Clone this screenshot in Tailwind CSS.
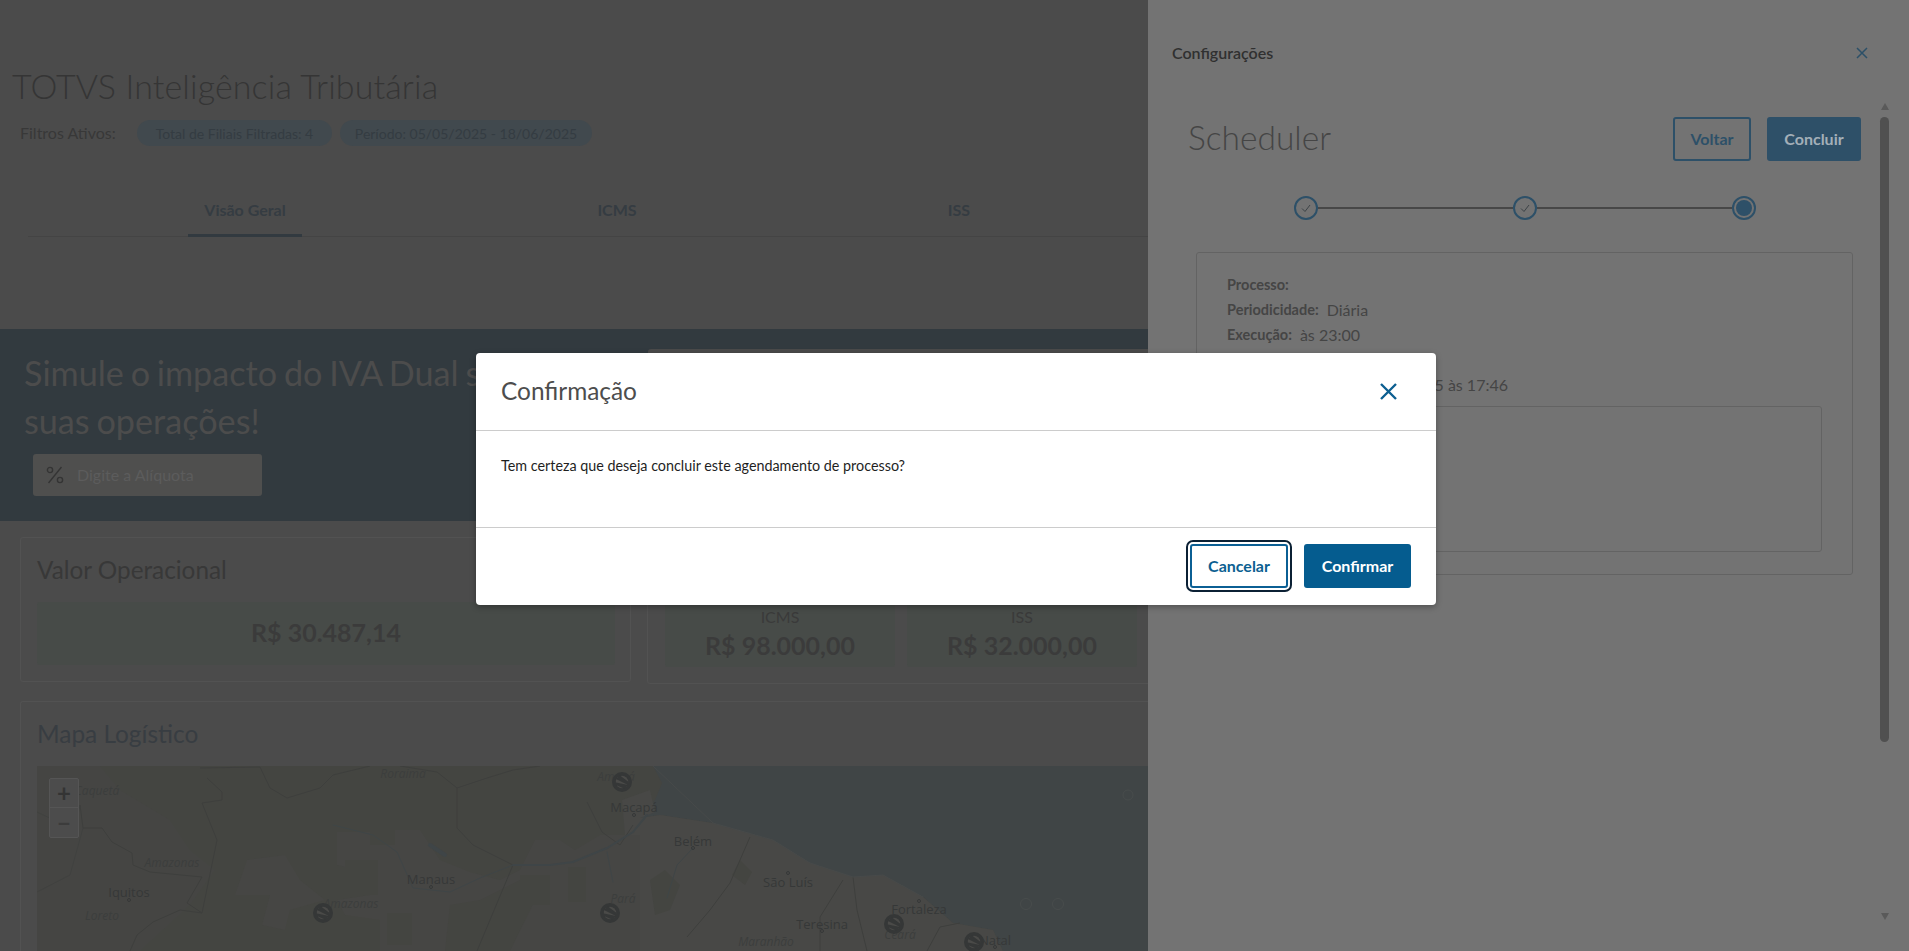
<!DOCTYPE html>
<html lang="pt-BR">
<head>
  <meta charset="UTF-8" />
  <title>TOTVS Inteligência Tributária</title>
  <script src="https://cdn.jsdelivr.net/npm/@tailwindcss/browser@4"></script>
</head>
<body class="relative flex h-screen overflow-hidden bg-[#4b4b4b] [font-family:Lato,'Noto_Sans',sans-serif]">

  <!-- pagina de fundo -->
  <main class="h-screen w-[1148px] shrink-0 overflow-hidden bg-[#4b4b4b]">
    <h1 class="mt-[62px] h-[48px] whitespace-nowrap pl-3 text-[34px] font-light leading-[48px] tracking-[0.12px] text-[#353535]">TOTVS Inteligência Tributária</h1>

    <div class="mt-[10px] flex h-[26px] items-center pl-5 text-[#383838]">
      <span class="w-[117px] text-[16px]">Filtros Ativos:</span>
      <span class="flex h-[26px] w-[195px] items-center justify-center rounded-full bg-[#41494e] text-[14px] text-[#343c42]">Total de Filiais Filtradas: 4</span>
      <span class="ml-2 flex h-[26px] w-[252px] items-center justify-center rounded-full bg-[#41494e] text-[14px] text-[#343c42]">Período: 05/05/2025 - 18/06/2025</span>
    </div>

    <nav class="ml-7 mt-[39px] flex h-[52px] border-b border-[#444444] text-[16px] font-bold text-[#353c42]">
      <a class="relative ml-[160px] flex h-[52px] w-[114px] items-start justify-center border-b-[3px] border-[#323a40] pt-[13px]">Visão Geral</a>
      <a class="ml-[275px] flex w-[80px] items-start justify-center pt-[13px]">ICMS</a>
      <a class="ml-[262px] flex w-[80px] items-start justify-center pt-[13px]">ISS</a>
    </nav>

    <section class="mt-[92px] flex h-[192px] bg-[#323a3f]">
      <div class="w-[648px] shrink-0 pl-6 pt-5">
        <h2 class="whitespace-nowrap text-[34.2px] leading-[48px] text-[#4c4c4c] [word-spacing:-2px]">Simule o impacto do IVA Dual sobre<br />suas operações!</h2>
        <div class="ml-[9px] mt-[9px] flex h-[42px] w-[229px] items-center rounded-[3px] bg-[#4f4f4e] pl-[13px]">
          <svg class="h-[18px] w-[18px]" viewBox="0 0 18 18" fill="none" stroke="#343434" stroke-width="1.4">
            <path d="M15.5 1 2.5 17" />
            <circle cx="4" cy="4" r="2.6" />
            <circle cx="14" cy="14" r="2.6" />
          </svg>
          <span class="ml-[13px] text-[16px] text-[#5c5c5c]">Digite a Alíquota</span>
        </div>
      </div>
      <div class="mt-5 flex-1 rounded-tl-[3px] bg-[#4a4a4a]"></div>
    </section>

    <div class="ml-5 mt-4 flex items-start gap-4">
      <article class="h-[145px] w-[611px] shrink-0 rounded-[3px] border border-[#525252] pl-4">
        <h3 class="mt-5 text-[24.3px] leading-[24px] text-[#383838]">Valor Operacional</h3>
        <div class="mt-[20px] flex h-[63px] w-[578px] items-center justify-center rounded-[3px] bg-[#474b48] pb-[2px] text-[25px] font-bold text-[#3b3b3b]">R$ 30.487,14</div>
      </article>
      <article class="flex h-[147px] w-[600px] shrink-0 items-start gap-3 rounded-[3px] border border-[#525252] pl-[17px] pt-[64px]">
        <div class="flex h-[65px] w-[230px] shrink-0 flex-col items-center rounded-[3px] bg-[#474b48]">
          <span class="mt-[5px] text-[16px] leading-[20px] text-[#3a3a3a]">ICMS</span>
          <span class="text-[25px] font-bold leading-[36px] text-[#3b3b3b]">R$ 98.000,00</span>
        </div>
        <div class="flex h-[65px] w-[230px] shrink-0 flex-col items-center rounded-[3px] bg-[#474b48]">
          <span class="mt-[5px] text-[16px] leading-[20px] text-[#3a3a3a]">ISS</span>
          <span class="text-[25px] font-bold leading-[36px] text-[#3b3b3b]">R$ 32.000,00</span>
        </div>
      </article>
    </div>

    <article class="ml-5 mt-[17px] w-[1200px] rounded-tl-[3px] border-l border-t border-[#525252] pl-4">
      <h3 class="mt-5 text-[24.4px] leading-[24px] text-[#383d42]">Mapa Logístico</h3>
      <div class="relative mt-5 h-[185px] w-[1111px] overflow-hidden">
        <svg class="block" width="1111" height="185" viewBox="37 766 1111 185">
          <defs>
            <g id="pin">
              <circle r="10" fill="#353737" />
              <circle r="6.2" fill="#4a4a48" />
              <path d="M-6-3 6 3V-.5L-2-6.5ZM-6 .5V3L2 6.5 6 3Z" fill="#353737" />
            </g>
          </defs>
          <rect x="37" y="766" width="1111" height="185" fill="#404546" />
          <!-- terra -->
          <path fill="#444541" d="M37 766H653L662 783 655 800 640 818 660 815 693 820 713 823 773 840 810 863 853 877 883 875 923 897 953 923 993 930 1003 951H37Z" />
          <!-- areas claras -->
          <path fill="#454543" d="M37 766H100L120 790 170 820 190 850 215 870 190 905 140 951H37Z" />
          <path fill="#464644" d="M247 860 285 855 300 880 325 900 290 910 285 930 262 925 270 895 235 895Z" />
          <path fill="#464644" d="M337 832H370V845H395V830H420L440 860 470 872 500 880 520 870 535 840H560L575 850 600 835H640V951H510L535 900 520 880 480 900 450 905 445 951H380V920L345 915 337 900 370 895 360 870 337 865Z" />
          <path fill="#484846" d="M622 800 650 790 655 812 640 818 660 815 693 820 713 823 773 840 810 863 853 877 883 875 923 897 953 923 993 930 1003 951H640V835L625 835Z" />
          <path fill="#444541" d="M345 860H378V895H345Z M387 913H412V945H387Z M568 867H586V902H568Z M520 875H550V905H520Z M650 880 665 870 680 885 670 910 655 915Z M740 860 752 872 745 885 732 875Z" />
          <!-- fronteiras -->
          <g fill="none" stroke="#3e3f3d" stroke-width="1">
            <path d="M80 805 83 828 102 828 112 842 123 848 132 853 133 865 150 872 202 877 187 903 202 913 180 910 153 922 137 935 130 951" />
            <path d="M207 778 222 792 222 800 202 803 217 840 202 913" />
            <path d="M200 768 260 767 270 788 287 798 320 788 333 775 370 766" />
            <path d="M400 766 437 772 457 788 487 778 513 770 540 766" />
            <path d="M457 788V828L473 845 507 862 513 865 477 951" />
            <path d="M587 802 602 832 620 845 633 825" />
            <path d="M750 837 730 883 710 910 687 937" />
            <path d="M843 880 820 917 820 951" />
            <path d="M853 877 857 910 867 951" />
            <path d="M960 923 940 927 927 951" />
            <path d="M37 812 75 830 80 805" stroke-opacity=".6" />
            <path d="M37 892 70 875 83 828" stroke-opacity=".6" />
          </g>
          <path d="M653 766 713 823 773 840 810 863 853 877 883 875 923 897" fill="none" stroke="#474a4a" stroke-width="1" />
          <!-- rios -->
          <g fill="none" stroke="#3f4547" stroke-linecap="round">
            <path stroke-width="1" d="M333 825 373 835 397 852 413 888 450 892 480 878 513 865" />
            <path stroke-width="2" d="M513 865 550 865 573 862 607 848 633 832 647 815" />
            <path stroke-width="1" d="M607 852 613 882M667 898 677 865 693 848" />
            <path stroke-width="4" d="M430 845 445 855" />
          </g>
          <!-- marcadores vazios no mar -->
          <g fill="none" stroke="#484c4c" stroke-width="1">
            <circle cx="1128" cy="795" r="5" />
            <circle cx="1026" cy="904" r="5.5" />
            <circle cx="1058" cy="904" r="5.5" />
          </g>
          <!-- cidades -->
          <g font-family="Open Sans, Noto Sans, sans-serif" font-size="13" fill="#363838" text-anchor="middle">
            <text x="129" y="897">Iquitos</text>
            <text x="431" y="884">Manaus</text>
            <text x="634" y="812">Macapá</text>
            <text x="693" y="846">Belém</text>
            <text x="788" y="887">São Luís</text>
            <text x="822" y="929">Teresina</text>
            <text x="919" y="914">Fortaleza</text>
            <text x="995" y="945">Natal</text>
          </g>
          <g fill="none" stroke="#363838">
            <circle cx="129" cy="900" r="1.5" /><circle cx="431" cy="887" r="1.5" /><circle cx="634" cy="815" r="1.5" /><circle cx="693" cy="848" r="1.5" />
            <circle cx="788" cy="873" r="1.5" /><circle cx="822" cy="931" r="1.5" /><circle cx="919" cy="901" r="1.5" /><circle cx="995" cy="947" r="1.5" />
          </g>
          <g font-family="Open Sans, Noto Sans, sans-serif" font-size="12" font-style="italic" fill="#3c3e3d" text-anchor="middle">
            <text x="97" y="795">Caquetá</text>
            <text x="172" y="867">Amazonas</text>
            <text x="102" y="920">Loreto</text>
            <text x="351" y="908">Amazonas</text>
            <text x="403" y="778">Roraima</text>
            <text x="616" y="781">Amapá</text>
            <text x="623" y="903">Pará</text>
            <text x="766" y="946">Maranhão</text>
            <text x="900" y="939">Ceará</text>
          </g>
          <use href="#pin" x="622" y="782" />
          <use href="#pin" x="323" y="913" />
          <use href="#pin" x="610" y="913" />
          <use href="#pin" x="894" y="924" />
          <use href="#pin" x="974" y="942" />
        </svg>
        <div class="absolute left-3 top-3 flex h-[60px] w-[30px] flex-col rounded-[2px] border border-[#555555] bg-[#4c4c4c] text-[#343434]">
          <span class="flex h-[30px] items-center justify-center border-b border-[#555555] text-[24px] font-bold leading-none">+</span>
          <span class="flex h-[30px] items-center justify-center text-[24px] font-bold leading-none text-[#3c3c3c]">−</span>
        </div>
      </div>
    </article>
  </main>

  <!-- painel lateral de configuracoes -->
  <aside class="relative h-screen w-[761px] shrink-0 overflow-hidden bg-[#737373]">
    <div class="flex h-[106px] items-start justify-between pl-6 pr-[41px] pt-[44px]">
      <span class="text-[16px] font-semibold leading-[18px] text-[#303030]">Configurações</span>
      <svg class="mt-[3px] h-3 w-3" viewBox="0 0 12 12" fill="none" stroke="#2c5068" stroke-width="1.5"><path d="M1 1 11 11M11 1 1 11" /></svg>
    </div>

    <div class="mt-[11px] flex h-[44px] items-center pl-10 pr-[48px]">
      <h2 class="flex-1 pb-[3px] text-[33.5px] font-light text-[#454545]">Scheduler</h2>
      <button class="h-[44px] w-[78px] rounded-[3px] border-2 border-[#2d5068] text-[16px] font-bold text-[#2d5068]">Voltar</button>
      <button class="ml-4 h-[44px] w-[94px] rounded-[3px] bg-[#2e5068] text-[16px] font-bold text-[#a3afb8]">Concluir</button>
    </div>

    <div class="ml-[146px] mt-[35px] flex w-[462px] items-center">
      <span class="flex h-6 w-6 shrink-0 items-center justify-center rounded-full border-2 border-[#2d5068]">
        <svg class="h-3 w-3" viewBox="0 0 12 12" fill="none" stroke="#3d4347" stroke-width="1"><path d="M2 6.5 5 9.5 10 3" /></svg>
      </span>
      <span class="h-[2px] flex-1 bg-[#474747]"></span>
      <span class="flex h-6 w-6 shrink-0 items-center justify-center rounded-full border-2 border-[#2d5068]">
        <svg class="h-3 w-3" viewBox="0 0 12 12" fill="none" stroke="#3d4347" stroke-width="1"><path d="M2 6.5 5 9.5 10 3" /></svg>
      </span>
      <span class="h-[2px] flex-1 bg-[#474747]"></span>
      <span class="flex h-6 w-6 shrink-0 items-center justify-center rounded-full border-2 border-[#2d5068]">
        <span class="h-4 w-4 rounded-full bg-[#2e5068]"></span>
      </span>
    </div>

    <section class="ml-12 mt-[32px] h-[323px] w-[657px] rounded-[3px] border border-[#636363] pl-[30px] pt-[19px] text-[#454545]">
      <p class="flex h-[25px] items-center text-[14.5px] font-bold">Processo:</p>
      <p class="flex h-[25px] items-center text-[14.5px] font-bold">Periodicidade:<span class="ml-2 text-[16px] font-normal">Diária</span></p>
      <p class="flex h-[25px] items-center text-[14.5px] font-bold">Execução:<span class="ml-2 text-[16px] font-normal">às 23:00</span></p>
      <p class="flex h-[25px] items-center text-[14.5px] font-bold">Status:<span class="ml-2 text-[16px] font-normal">Ativo</span></p>
      <p class="flex h-[25px] w-[281px] items-center justify-between text-[14.5px] font-bold">Início:<span class="text-[16px] font-normal">18/06/2025 às 17:46</span></p>
      <div class="mt-[9px] h-[146px] w-[595px] rounded-[3px] border border-[#636363]"></div>
    </section>

    <!-- barra de rolagem -->
    <div class="absolute bottom-[31px] right-5 top-[103px] flex w-[9px] flex-col items-center">
      <span class="h-0 w-0 border-x-[4px] border-b-[7px] border-x-transparent border-b-[#5a5a5a]"></span>
      <span class="mt-[7px] h-[625px] w-[9px] rounded-full bg-[#505050]"></span>
      <span class="mt-auto h-0 w-0 border-x-[4px] border-t-[7px] border-x-transparent border-t-[#5a5a5a]"></span>
    </div>
  </aside>

  <!-- modal de confirmacao -->
  <div class="absolute left-[476px] top-[353px] flex h-[252px] w-[960px] flex-col rounded-[4px] bg-white shadow-[0_2px_6px_rgba(0,0,0,0.3)]">
    <header class="flex h-[78px] items-center justify-between border-b border-[#cccccc] pl-[25px] pr-[39px]">
      <h2 class="text-[24.4px] text-[#4d4d4d]">Confirmação</h2>
      <svg class="h-[17px] w-[17px]" viewBox="0 0 17 17" fill="none" stroke="#0c5f91" stroke-width="2.4"><path d="M1 1 16 16M16 1 1 16" /></svg>
    </header>
    <p class="h-[97px] border-b border-[#cccccc] pl-[25px] pt-[25px] text-[14.35px] leading-[20px] text-[#1f1f1f]">Tem certeza que deseja concluir este agendamento de processo?</p>
    <footer class="flex flex-1 items-center justify-end pb-[1px] pr-[25px]">
      <button class="h-[44px] w-[98px] rounded-[3px] border-2 border-[#0b5f94] bg-white text-[16px] font-bold text-[#0c5f91] outline-2 outline-offset-2 outline-[#0b2034]">Cancelar</button>
      <button class="ml-4 h-[44px] w-[107px] rounded-[3px] bg-[#055c8f] text-[16px] font-bold text-white">Confirmar</button>
    </footer>
  </div>

</body>
</html>
